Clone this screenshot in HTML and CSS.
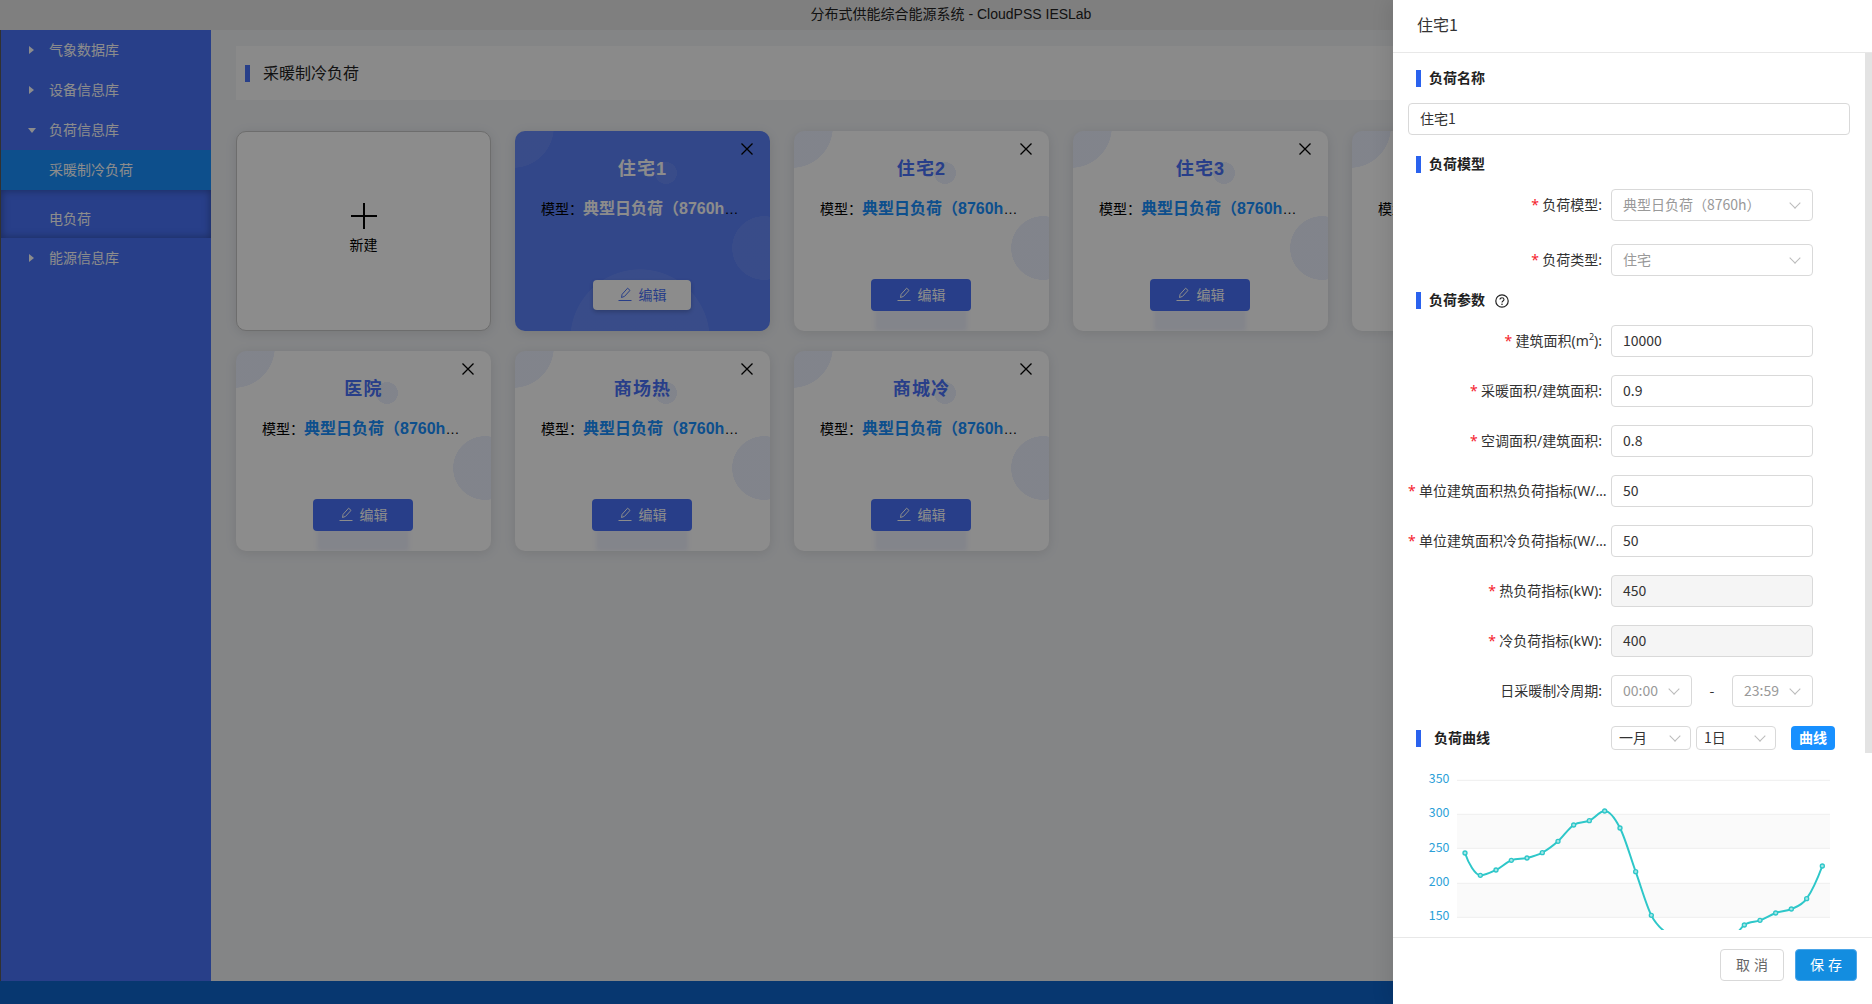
FILE: index.html
```html
<!DOCTYPE html>
<html>
<head>
  <meta charset="utf-8">
  <title>分布式供能综合能源系统 - CloudPSS IESLab</title>
  <link rel="stylesheet" href="styles.css">
</head>
<body>
  <div class="app">
    <header class="topbar">分布式供能综合能源系统 - CloudPSS IESLab</header>

    <div class="layout">
      <nav class="sidebar">
        <div class="nav-item"><i class="arrow"></i>气象数据库</div>
        <div class="nav-item"><i class="arrow"></i>设备信息库</div>
        <div class="nav-item"><i class="arrow open"></i>负荷信息库</div>
        <div class="nav-sub active">采暖制冷负荷</div>
        <div class="nav-sub inset">电负荷</div>
        <div class="nav-item"><i class="arrow"></i>能源信息库</div>
      </nav>

      <main class="main">
        <div class="page-head"><span class="page-mark"></span>采暖制冷负荷</div>

        <div class="cards">
          <div class="card card-new">
            <svg class="plus" width="26" height="26" viewBox="0 0 26 26"><path d="M13 0v26M0 13h26" stroke="#000" stroke-width="2" fill="none"/></svg>
            <span>新建</span>
          </div>

          <div class="card selected">
            <svg class="close" width="12" height="12" viewBox="0 0 12 12"><path d="M.5.5l11 11M11.5.5l-11 11" stroke="#000" stroke-width="1.3" fill="none"/></svg>
            <div class="card-title">住宅1</div>
            <p class="card-model">模型：<b>典型日负荷（8760h）</b></p>
            <button class="edit-btn"><svg width="14" height="14" viewBox="0 0 14 14"><path d="M.5 13.5h13M3.5 10.5l.6-3.2L9.6 1.2l2.4 2.2-5.5 6z" stroke="currentColor" fill="none"/></svg>编辑</button>
          </div>

          <div class="card">
            <svg class="close" width="12" height="12" viewBox="0 0 12 12"><path d="M.5.5l11 11M11.5.5l-11 11" stroke="#000" stroke-width="1.3" fill="none"/></svg>
            <div class="card-title">住宅2</div>
            <p class="card-model">模型：<b>典型日负荷（8760h）</b></p>
            <button class="edit-btn"><svg width="14" height="14" viewBox="0 0 14 14"><path d="M.5 13.5h13M3.5 10.5l.6-3.2L9.6 1.2l2.4 2.2-5.5 6z" stroke="currentColor" fill="none"/></svg>编辑</button>
          </div>

          <div class="card">
            <svg class="close" width="12" height="12" viewBox="0 0 12 12"><path d="M.5.5l11 11M11.5.5l-11 11" stroke="#000" stroke-width="1.3" fill="none"/></svg>
            <div class="card-title">住宅3</div>
            <p class="card-model">模型：<b>典型日负荷（8760h）</b></p>
            <button class="edit-btn"><svg width="14" height="14" viewBox="0 0 14 14"><path d="M.5 13.5h13M3.5 10.5l.6-3.2L9.6 1.2l2.4 2.2-5.5 6z" stroke="currentColor" fill="none"/></svg>编辑</button>
          </div>

          <div class="card">
            <div class="card-title"></div>
            <p class="card-model">模型：<b>典型日负荷（8760h）</b></p>
          </div>

          <div class="card">
            <svg class="close" width="12" height="12" viewBox="0 0 12 12"><path d="M.5.5l11 11M11.5.5l-11 11" stroke="#000" stroke-width="1.3" fill="none"/></svg>
            <div class="card-title">医院</div>
            <p class="card-model">模型：<b>典型日负荷（8760h）</b></p>
            <button class="edit-btn"><svg width="14" height="14" viewBox="0 0 14 14"><path d="M.5 13.5h13M3.5 10.5l.6-3.2L9.6 1.2l2.4 2.2-5.5 6z" stroke="currentColor" fill="none"/></svg>编辑</button>
          </div>

          <div class="card">
            <svg class="close" width="12" height="12" viewBox="0 0 12 12"><path d="M.5.5l11 11M11.5.5l-11 11" stroke="#000" stroke-width="1.3" fill="none"/></svg>
            <div class="card-title">商场热</div>
            <p class="card-model">模型：<b>典型日负荷（8760h）</b></p>
            <button class="edit-btn"><svg width="14" height="14" viewBox="0 0 14 14"><path d="M.5 13.5h13M3.5 10.5l.6-3.2L9.6 1.2l2.4 2.2-5.5 6z" stroke="currentColor" fill="none"/></svg>编辑</button>
          </div>

          <div class="card">
            <svg class="close" width="12" height="12" viewBox="0 0 12 12"><path d="M.5.5l11 11M11.5.5l-11 11" stroke="#000" stroke-width="1.3" fill="none"/></svg>
            <div class="card-title">商城冷</div>
            <p class="card-model">模型：<b>典型日负荷（8760h）</b></p>
            <button class="edit-btn"><svg width="14" height="14" viewBox="0 0 14 14"><path d="M.5 13.5h13M3.5 10.5l.6-3.2L9.6 1.2l2.4 2.2-5.5 6z" stroke="currentColor" fill="none"/></svg>编辑</button>
          </div>
        </div>
      </main>
    </div>

    <footer class="bottombar"></footer>
  </div>

  <div class="mask"></div>

  <aside class="drawer">
    <div class="drawer-head">住宅1</div>

    <div class="drawer-body">
      <div class="scroll-thumb"></div>

      <div class="sec-title">负荷名称</div>
      <div class="input name-input">住宅1</div>

      <div class="sec-title">负荷模型</div>
      <div class="form-group model-group">
        <div class="form-row">
          <label class="req">负荷模型:</label>
          <div class="select muted">典型日负荷（8760h）</div>
        </div>
        <div class="form-row">
          <label class="req">负荷类型:</label>
          <div class="select muted">住宅</div>
        </div>
      </div>

      <div class="sec-title">负荷参数
        <svg class="help" width="14" height="14" viewBox="0 0 14 14"><circle cx="7" cy="7" r="6.2" stroke="#222" stroke-width="1.2" fill="none"/><path d="M5 5.6c0-1.1.9-1.8 2-1.8s2 .7 2 1.7c0 1.4-2 1.5-2 2.9" stroke="#222" stroke-width="1.1" fill="none"/><circle cx="7" cy="10.3" r=".8" fill="#222"/></svg>
      </div>
      <div class="form-group param-group">
        <div class="form-row">
          <label class="req">建筑面积(m<sup>2</sup>):</label>
          <div class="input">10000</div>
        </div>
        <div class="form-row">
          <label class="req">采暖面积/建筑面积:</label>
          <div class="input">0.9</div>
        </div>
        <div class="form-row">
          <label class="req">空调面积/建筑面积:</label>
          <div class="input">0.8</div>
        </div>
        <div class="form-row">
          <label class="req long">单位建筑面积热负荷指标(W/m²):</label>
          <div class="input">50</div>
        </div>
        <div class="form-row">
          <label class="req long">单位建筑面积冷负荷指标(W/m²):</label>
          <div class="input">50</div>
        </div>
        <div class="form-row">
          <label class="req">热负荷指标(kW):</label>
          <div class="input disabled">450</div>
        </div>
        <div class="form-row">
          <label class="req">冷负荷指标(kW):</label>
          <div class="input disabled">400</div>
        </div>
        <div class="form-row">
          <label>日采暖制冷周期:</label>
          <div class="select muted time">00:00</div>
          <span class="dash">-</span>
          <div class="select muted time">23:59</div>
        </div>
      </div>

      <div class="curve-head">
        <div class="curve-title">负荷曲线</div>
        <div class="select small">一月</div>
        <div class="select small">1日</div>
        <button class="curve-btn">曲线</button>
      </div>

      <svg class="chart" width="472" height="168" viewBox="9 186 1416 504">
        <rect x="201" y="343" width="1119" height="102" fill="#fafafa"/>
        <rect x="201" y="550" width="1119" height="102" fill="#fafafa"/>
        <g stroke="#eeeeee" stroke-width="3">
          <line x1="201" y1="241" x2="1320" y2="241"/>
          <line x1="201" y1="343" x2="1320" y2="343"/>
          <line x1="201" y1="445" x2="1320" y2="445"/>
          <line x1="201" y1="550" x2="1320" y2="550"/>
          <line x1="201" y1="652" x2="1320" y2="652"/>
        </g>
        <g class="axis" text-anchor="end" font-size="37" fill="#2b9fd8">
          <text x="178" y="249">350</text>
          <text x="178" y="351">300</text>
          <text x="178" y="457">250</text>
          <text x="178" y="558">200</text>
          <text x="178" y="660">150</text>
        </g>
        <path fill="none" stroke="#2ec7c9" stroke-width="6" d="M225 459C235 490 256 526 271 526S302.5 517.5 318 510S348.5 487 364 481S395.5 477.8 411 474S441.5 466.3 457 458S488.3 437.8 504 424S535.3 385.3 551 375S582.5 369 598 362S628.7 333 644 333S674.5 353.7 690 384S721.3 471.3 737 515S768.5 615.2 784 646S814.5 686 830 700S861.3 722.5 877 730S908.5 742.5 924 745S954.5 747.5 970 745S1001.5 741.7 1017 730S1047.5 686.5 1063 675S1094.3 667 1110 661S1141.3 644.7 1157 639S1188.5 634.2 1204 627S1234.5 617.5 1250 596S1285 530 1297 498"/>
        <g fill="#a5e6e7" stroke="#2ec7c9" stroke-width="4">
          <circle cx="225" cy="459" r="6"/><circle cx="271" cy="526" r="6"/><circle cx="318" cy="510" r="6"/>
          <circle cx="364" cy="481" r="6"/><circle cx="411" cy="474" r="6"/><circle cx="457" cy="458" r="6"/>
          <circle cx="504" cy="424" r="6"/><circle cx="551" cy="375" r="6"/><circle cx="598" cy="362" r="6"/>
          <circle cx="644" cy="333" r="6"/><circle cx="690" cy="384" r="6"/><circle cx="737" cy="515" r="6"/>
          <circle cx="784" cy="646" r="6"/><circle cx="1063" cy="675" r="6"/><circle cx="1110" cy="661" r="6"/>
          <circle cx="1157" cy="639" r="6"/><circle cx="1204" cy="627" r="6"/><circle cx="1250" cy="596" r="6"/>
          <circle cx="1297" cy="498" r="6"/>
        </g>
      </svg>
    </div>

    <div class="drawer-foot">
      <button class="btn-cancel">取消</button>
      <button class="btn-save">保存</button>
    </div>
  </aside>
</body>
</html>
```

FILE: styles.css
```css
* {
  box-sizing: border-box;
}
html, body {
  height: 100%;
  margin: 0;
  overflow: hidden;
}
body {
  font-family: "Noto Sans CJK SC", sans-serif;
  font-size: 14px;
  color: #333;
}
button {
  font-family: inherit;
  cursor: pointer;
}

/* page behind the drawer */
.app {
  display: flex;
  flex-direction: column;
  height: 100%;
  background: #f0f2f5;
}
.topbar {
  height: 30px;
  padding-left: 30px;
  background: #e8e8e8;
  color: #222;
  font-family: "Liberation Sans", "Noto Sans CJK SC", sans-serif;
  line-height: 28px;
  text-align: center;
}
.layout {
  display: flex;
  flex: 1;
  min-height: 0;
}
.bottombar {
  height: 23px;
  background: #0e64cc;
}

.sidebar {
  width: 211px;
  flex-shrink: 0;
  border-left: 1px solid #5a5a5a;
  background: #4973f9;
  color: #fff;
}
.nav-item {
  display: flex;
  align-items: center;
  height: 40px;
  padding-left: 28px;
  padding-bottom: 2px;
}
.nav-sub {
  display: flex;
  align-items: center;
  height: 40px;
  padding-left: 48px;
  padding-bottom: 2px;
}
.nav-sub.active {
  background: #1890ff;
}
.nav-sub.inset {
  height: 48px;
  padding-top: 8px;
  padding-bottom: 0;
  box-shadow: inset 0 0 8px rgba(0, 0, 0, .35);
}
.arrow {
  width: 0;
  height: 0;
  margin-top: 2px;
  margin-right: 15px;
  border-top: 4px solid transparent;
  border-bottom: 4px solid transparent;
  border-left: 5px solid #fff;
}
.arrow.open {
  margin-right: 13px;
  margin-left: -1px;
  border-top: 5px solid #fff;
  border-right: 4px solid transparent;
  border-bottom: 0;
  border-left: 4px solid transparent;
}

.main {
  flex: 1;
  min-width: 0;
  padding: 16px 25px 0;
}
.page-head {
  display: flex;
  align-items: center;
  height: 54px;
  padding-left: 9px;
  padding-bottom: 2px;
  background: #fbfbfb;
  color: #222;
  font-size: 16px;
}
.page-mark {
  width: 5px;
  height: 17px;
  margin-top: 2px;
  margin-right: 13px;
  background: #4973f9;
}

.cards {
  display: flex;
  flex-wrap: wrap;
  gap: 20px 24px;
  margin-top: 31px;
}
.card {
  --dot: rgba(73, 114, 249, .1);
  position: relative;
  display: flex;
  flex-direction: column;
  width: 255px;
  height: 200px;
  overflow: hidden;
  border-radius: 10px;
  background:
    radial-gradient(circle 41px at -2px -4px, var(--dot) 99%, transparent 100%),
    radial-gradient(circle 11px at 151px 42px, var(--dot) 99%, transparent 100%),
    radial-gradient(circle 32px at 249px 117px, var(--dot) 99%, transparent 100%),
    #fff;
  box-shadow: 0 2px 12px rgba(0, 0, 0, .1);
  font-family: "Liberation Sans", "Noto Sans CJK SC", sans-serif;
}
.card-new {
  align-items: center;
  justify-content: center;
  padding-bottom: 5px;
  border: 1px solid #c6c6c6;
  background: #fff;
  color: #000;
}
.plus {
  margin-bottom: 5px;
}
.close {
  position: absolute;
  top: 12px;
  right: 17px;
}
.card-title {
  height: 24px;
  margin-top: 26px;
  color: #4972f9;
  font-size: 18px;
  font-weight: bold;
  letter-spacing: 1.2px;
  line-height: 24px;
  text-align: center;
}
.card-model {
  height: 22px;
  margin: 17px 0 0;
  padding: 0 31px 0 26px;
  overflow: hidden;
  color: #000;
  line-height: 22px;
  white-space: nowrap;
  text-overflow: ellipsis;
}
.card-model b {
  color: #1890ff;
  font-size: 16px;
}
.edit-btn {
  display: flex;
  align-items: center;
  justify-content: center;
  gap: 7px;
  width: 100px;
  height: 32px;
  margin: auto 0 20px 77px;
  padding: 0 0 2px;
  border: 0;
  border-radius: 4px;
  background: #4972f9;
  color: #fff;
  font-family: "Noto Sans CJK SC", sans-serif;
  font-size: 14px;
  box-shadow: 0 24px 4px -4px rgba(73, 114, 249, .09);
}
.card.selected {
  --dot: rgba(255, 255, 255, .08);
  background:
    radial-gradient(circle 41px at -2px -4px, var(--dot) 99%, transparent 100%),
    radial-gradient(circle 11px at 151px 42px, var(--dot) 99%, transparent 100%),
    radial-gradient(circle 32px at 249px 117px, var(--dot) 99%, transparent 100%),
    radial-gradient(circle 70px at 125px 208px, var(--dot) 99%, transparent 100%),
    #5b81f9;
}
.selected .card-title,
.selected .card-model b {
  color: #fff;
}
.selected .edit-btn {
  width: 98px;
  height: 30px;
  margin: auto 0 21px 78px;
  background: #fff;
  color: #4972f9;
  box-shadow: 0 2px 4px rgba(0, 0, 0, .2);
}

.mask {
  position: absolute;
  inset: 0;
  background: rgba(0, 0, 0, .45);
}

/* drawer */
.drawer {
  position: absolute;
  top: 0;
  right: 0;
  bottom: 0;
  display: flex;
  flex-direction: column;
  width: 479px;
  background: #fff;
  box-shadow: -6px 0 16px rgba(0, 0, 0, .08);
}
.drawer-head {
  height: 53px;
  padding-left: 24px;
  border-bottom: 1px solid #e8e8e8;
  font-size: 16px;
  line-height: 48px;
}
.drawer-body {
  position: relative;
  flex: 1;
  min-height: 0;
  padding-top: 17px;
  overflow: hidden;
}
.scroll-thumb {
  position: absolute;
  top: 0;
  right: 0;
  width: 7px;
  height: 700px;
  background: #e3e3e3;
}
.sec-title {
  display: flex;
  align-items: center;
  height: 17px;
  margin: 0 0 16px 23px;
  padding-left: 8px;
  padding-bottom: 4px;
  border-left: 5px solid #2a62ee;
  color: #222;
  font-weight: bold;
}
.help {
  margin-top: 4px;
  margin-left: 10px;
}
.input,
.select {
  height: 32px;
  padding: 0 11px;
  border: 1px solid #d9d9d9;
  border-radius: 4px;
  line-height: 28px;
}
.form-row .input,
.form-row .select {
  width: 202px;
}
.name-input {
  width: 442px;
  margin: 0 0 21px 15px;
}
.input.disabled {
  background: #f5f5f5;
}
.select {
  position: relative;
}
.select::after {
  content: "";
  position: absolute;
  top: 9px;
  right: 13px;
  width: 7px;
  height: 7px;
  border-right: 1px solid #bbb;
  border-bottom: 1px solid #bbb;
  transform: rotate(45deg);
}
.muted {
  color: #999;
}
.form-group {
  display: flex;
  flex-direction: column;
}
.model-group {
  gap: 23px;
  margin-bottom: 16px;
}
.param-group {
  gap: 18px;
  margin-bottom: 19px;
}
.form-row {
  display: flex;
  align-items: center;
  height: 32px;
  padding-left: 15px;
}
.form-row label {
  width: 198px;
  margin-right: 5px;
  margin-bottom: 2px;
  padding-right: 4px;
  overflow: hidden;
  font-family: "Noto Sans", "Noto Sans CJK SC", sans-serif;
  white-space: nowrap;
  text-overflow: ellipsis;
  text-align: right;
}
.form-row label.long {
  width: 201px;
  margin-right: 2px;
  padding-right: 0;
}
.form-row label sup {
  font-size: 9px;
  line-height: 0;
}
.req::before {
  content: "*";
  display: inline-block;
  width: 11px;
  color: #f5222d;
  text-align: left;
}
.form-row .time {
  width: 81px;
}
.dash {
  width: 40px;
  margin-bottom: 2px;
  text-align: center;
}
.curve-head {
  display: flex;
  align-items: center;
  height: 24px;
  margin: 0 0 12px 23px;
}
.curve-title {
  width: 195px;
  height: 17px;
  padding-left: 13px;
  border-left: 5px solid #2a62ee;
  color: #222;
  font-weight: bold;
  line-height: 15px;
}
.select.small {
  width: 80px;
  height: 24px;
  margin-right: 5px;
  padding: 0 7px;
  line-height: 20px;
}
.select.small::after {
  top: 5px;
  right: 11px;
}
.curve-btn {
  width: 44px;
  height: 24px;
  margin-left: 10px;
  padding: 0 0 2px;
  border: 0;
  border-radius: 4px;
  background: #1890ff;
  color: #fff;
  font-size: 14px;
  font-weight: bold;
}
.chart {
  display: block;
  overflow: hidden;
}
.axis {
  font-family: "Noto Sans CJK SC", sans-serif;
}
.drawer-foot {
  display: flex;
  justify-content: flex-end;
  gap: 11px;
  height: 67px;
  padding: 11px 15px 0 0;
  border-top: 1px solid #e8e8e8;
}
.drawer-foot button {
  height: 32px;
  padding: 0 0 2px 4px;
  border-radius: 4px;
  font-size: 14px;
  letter-spacing: 4px;
}
.btn-cancel {
  width: 64px;
  border: 1px solid #d9d9d9;
  background: #fff;
  color: #666;
}
.btn-save {
  width: 62px;
  border: 1px solid #4aa5e8;
  background: #138de0;
  color: #fff;
}
```
